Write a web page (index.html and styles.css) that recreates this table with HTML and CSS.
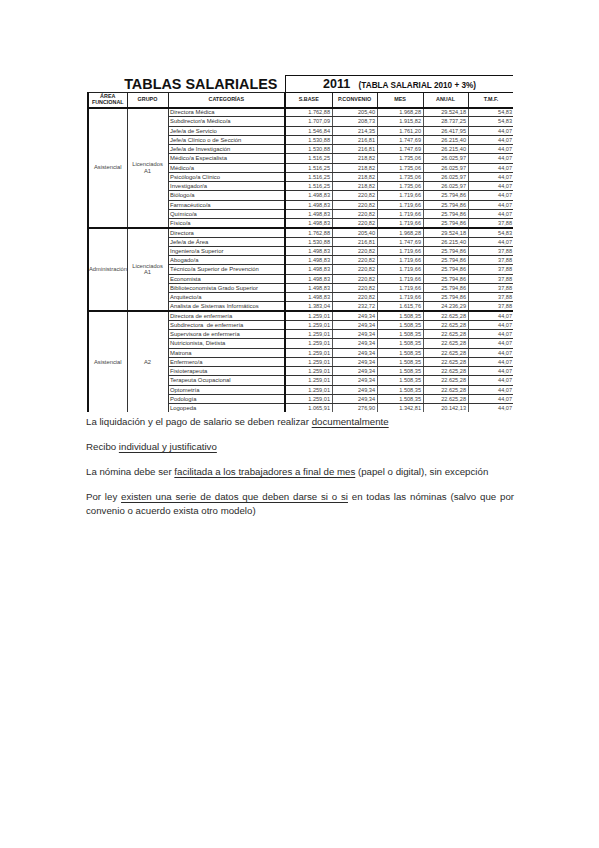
FILE: index.html
```html
<!DOCTYPE html>
<html lang="es">
<head>
<meta charset="utf-8">
<title>Tablas salariales</title>
<link rel="stylesheet" href="styles.css">
</head>
<body>
<div class="page">
  <div class="sheet">
    <table class="tbl">
      <colgroup>
        <col class="c-area"><col class="c-grupo"><col class="c-cat">
        <col class="c-base"><col class="c-conv"><col class="c-mes"><col class="c-anual"><col class="c-tmf">
      </colgroup>
      <tr class="title-row">
        <td colspan="3" class="title">TABLAS SALARIALES</td>
        <td colspan="5" class="year"><span class="y">2011</span> <span class="ysub">(TABLA SALARIAL 2010 + 3%)</span></td>
      </tr>
      <tr class="head">
        <th class="area">ÁREA<br>FUNCIONAL</th>
        <th>GRUPO</th>
        <th class="cat">CATEGORÍAS</th>
        <th class="first">S.BASE</th>
        <th>P.CONVENIO</th>
        <th>MES</th>
        <th>ANUAL</th>
        <th class="last">T.M.F.</th>
      </tr>
      <tr class="row grp">
        <td rowspan="13" class="area lbl">Asistencial</td>
        <td rowspan="13" class="grupo lbl">Licenciados<br>A1</td>
        <td class="cat">Directora Médica</td><td class="n first">1.762,88</td><td class="n">205,40</td><td class="n">1.968,28</td><td class="n">29.524,18</td><td class="n last">54,83</td>
      </tr>
      <tr class="row"><td class="cat">Subdirector/a Médico/a</td><td class="n first">1.707,09</td><td class="n">208,73</td><td class="n">1.915,82</td><td class="n">28.737,25</td><td class="n last">54,83</td></tr>
      <tr class="row"><td class="cat">Jefe/a de Servicio</td><td class="n first">1.546,84</td><td class="n">214,35</td><td class="n">1.761,20</td><td class="n">26.417,95</td><td class="n last">44,07</td></tr>
      <tr class="row"><td class="cat">Jefe/a Clínico o de Sección</td><td class="n first">1.530,88</td><td class="n">216,81</td><td class="n">1.747,69</td><td class="n">26.215,40</td><td class="n last">44,07</td></tr>
      <tr class="row"><td class="cat">Jefe/a de Investigación</td><td class="n first">1.530,88</td><td class="n">216,81</td><td class="n">1.747,69</td><td class="n">26.215,40</td><td class="n last">44,07</td></tr>
      <tr class="row"><td class="cat">Médico/a Especialista</td><td class="n first">1.516,25</td><td class="n">218,82</td><td class="n">1.735,06</td><td class="n">26.025,97</td><td class="n last">44,07</td></tr>
      <tr class="row"><td class="cat">Médico/a</td><td class="n first">1.516,25</td><td class="n">218,82</td><td class="n">1.735,06</td><td class="n">26.025,97</td><td class="n last">44,07</td></tr>
      <tr class="row"><td class="cat">Psicólogo/a Clínico</td><td class="n first">1.516,25</td><td class="n">218,82</td><td class="n">1.735,06</td><td class="n">26.025,97</td><td class="n last">44,07</td></tr>
      <tr class="row"><td class="cat">Investigador/a</td><td class="n first">1.516,25</td><td class="n">218,82</td><td class="n">1.735,06</td><td class="n">26.025,97</td><td class="n last">44,07</td></tr>
      <tr class="row"><td class="cat">Biólogo/a</td><td class="n first">1.498,83</td><td class="n">220,82</td><td class="n">1.719,66</td><td class="n">25.794,86</td><td class="n last">44,07</td></tr>
      <tr class="row"><td class="cat">Farmacéutico/a</td><td class="n first">1.498,83</td><td class="n">220,82</td><td class="n">1.719,66</td><td class="n">25.794,86</td><td class="n last">44,07</td></tr>
      <tr class="row"><td class="cat">Químico/a</td><td class="n first">1.498,83</td><td class="n">220,82</td><td class="n">1.719,66</td><td class="n">25.794,86</td><td class="n last">44,07</td></tr>
      <tr class="row"><td class="cat">Físico/a</td><td class="n first">1.498,83</td><td class="n">220,82</td><td class="n">1.719,66</td><td class="n">25.794,86</td><td class="n last">37,88</td></tr>

      <tr class="row grp">
        <td rowspan="9" class="area lbl">Administración</td>
        <td rowspan="9" class="grupo lbl">Licenciados<br>A1</td>
        <td class="cat">Directora</td><td class="n first">1.762,88</td><td class="n">205,40</td><td class="n">1.968,28</td><td class="n">29.524,18</td><td class="n last">54,83</td>
      </tr>
      <tr class="row"><td class="cat">Jefe/a de Área</td><td class="n first">1.530,88</td><td class="n">216,81</td><td class="n">1.747,69</td><td class="n">26.215,40</td><td class="n last">44,07</td></tr>
      <tr class="row"><td class="cat">Ingeniero/a Superior</td><td class="n first">1.498,83</td><td class="n">220,82</td><td class="n">1.719,66</td><td class="n">25.794,86</td><td class="n last">37,88</td></tr>
      <tr class="row"><td class="cat">Abogado/a</td><td class="n first">1.498,83</td><td class="n">220,82</td><td class="n">1.719,66</td><td class="n">25.794,86</td><td class="n last">37,88</td></tr>
      <tr class="row"><td class="cat">Técnico/a Superior de Prevención</td><td class="n first">1.498,83</td><td class="n">220,82</td><td class="n">1.719,66</td><td class="n">25.794,86</td><td class="n last">37,88</td></tr>
      <tr class="row"><td class="cat">Economista</td><td class="n first">1.498,83</td><td class="n">220,82</td><td class="n">1.719,66</td><td class="n">25.794,86</td><td class="n last">37,88</td></tr>
      <tr class="row"><td class="cat">Biblioteconomista Grado Superior</td><td class="n first">1.498,83</td><td class="n">220,82</td><td class="n">1.719,66</td><td class="n">25.794,86</td><td class="n last">37,88</td></tr>
      <tr class="row"><td class="cat">Arquitecto/a</td><td class="n first">1.498,83</td><td class="n">220,82</td><td class="n">1.719,66</td><td class="n">25.794,86</td><td class="n last">37,88</td></tr>
      <tr class="row"><td class="cat">Analista de Sistemas Informáticos</td><td class="n first">1.383,04</td><td class="n">232,72</td><td class="n">1.615,76</td><td class="n">24.236,29</td><td class="n last">37,88</td></tr>

      <tr class="row grp">
        <td rowspan="11" class="area lbl">Asistencial</td>
        <td rowspan="11" class="grupo lbl">A2</td>
        <td class="cat">Directora de enfermería</td><td class="n first">1.259,01</td><td class="n">249,34</td><td class="n">1.508,35</td><td class="n">22.625,28</td><td class="n last">44,07</td>
      </tr>
      <tr class="row"><td class="cat">Subdirectora&nbsp; de enfermería</td><td class="n first">1.259,01</td><td class="n">249,34</td><td class="n">1.508,35</td><td class="n">22.625,28</td><td class="n last">44,07</td></tr>
      <tr class="row"><td class="cat">Supervisora de enfermería</td><td class="n first">1.259,01</td><td class="n">249,34</td><td class="n">1.508,35</td><td class="n">22.625,28</td><td class="n last">44,07</td></tr>
      <tr class="row"><td class="cat">Nutricionista, Dietista</td><td class="n first">1.259,01</td><td class="n">249,34</td><td class="n">1.508,35</td><td class="n">22.625,28</td><td class="n last">44,07</td></tr>
      <tr class="row"><td class="cat">Matrona</td><td class="n first">1.259,01</td><td class="n">249,34</td><td class="n">1.508,35</td><td class="n">22.625,28</td><td class="n last">44,07</td></tr>
      <tr class="row"><td class="cat">Enfermero/a</td><td class="n first">1.259,01</td><td class="n">249,34</td><td class="n">1.508,35</td><td class="n">22.625,28</td><td class="n last">44,07</td></tr>
      <tr class="row"><td class="cat">Fisioterapeuta</td><td class="n first">1.259,01</td><td class="n">249,34</td><td class="n">1.508,35</td><td class="n">22.625,28</td><td class="n last">44,07</td></tr>
      <tr class="row"><td class="cat">Terapeuta Ocupacional</td><td class="n first">1.259,01</td><td class="n">249,34</td><td class="n">1.508,35</td><td class="n">22.625,28</td><td class="n last">44,07</td></tr>
      <tr class="row"><td class="cat">Optometría</td><td class="n first">1.259,01</td><td class="n">249,34</td><td class="n">1.508,35</td><td class="n">22.625,28</td><td class="n last">44,07</td></tr>
      <tr class="row"><td class="cat">Podología</td><td class="n first">1.259,01</td><td class="n">249,34</td><td class="n">1.508,35</td><td class="n">22.625,28</td><td class="n last">44,07</td></tr>
      <tr class="row"><td class="cat">Logopeda</td><td class="n first">1.065,91</td><td class="n">276,90</td><td class="n">1.342,81</td><td class="n">20.142,13</td><td class="n last">44,07</td></tr>
    </table>
  </div>

  <div class="text">
    <p>La liquidación y el pago de salario se deben realizar <u>documentalmente</u></p>
    <p>Recibo <u>individual y justificativo</u></p>
    <p>La nómina debe ser <u>facilitada a los trabajadores a final de mes</u> (papel o digital), sin excepción</p>
    <p class="just">Por ley <u>existen una serie de datos que deben darse si o si</u> en todas las nóminas (salvo que por convenio o acuerdo exista otro modelo)</p>
  </div>
</div>
</body>
</html>
```

FILE: styles.css
```css
* { box-sizing: border-box; }
html, body { margin: 0; padding: 0; background: #ffffff; }
.page { width: 599px; height: 848px; position: relative; overflow: hidden; }

.sheet {
  margin-left: 87px;
  padding-top: 75px;
  width: 426px;
  height: 412px;
  overflow: hidden;
}

.tbl {
  border-collapse: collapse;
  table-layout: fixed;
  width: 426px;
  font-family: "Liberation Sans Narrow", "Liberation Sans", Arial, sans-serif;
  color: #2a2a2a;
}
.c-area { width: 39px; }
.c-grupo { width: 41px; }
.c-cat { width: 117px; }
.c-base { width: 47px; }
.c-conv { width: 45px; }
.c-mes { width: 46px; }
.c-anual { width: 45px; }
.c-tmf { width: 46px; }

.tbl td, .tbl th { padding: 0; overflow: hidden; white-space: nowrap; }

.title-row { height: 17px; }
.title {
  font-family: "Liberation Sans", Arial, sans-serif;
  font-weight: bold;
  font-size: 14.4px;
  line-height: 14px;
  color: #111;
  text-align: center;
  padding-left: 29px !important;
  vertical-align: bottom;
  padding-bottom: 1px !important;
}
.year {
  border: 1.5px solid #111;
  border-bottom: 1.5px solid #111;
  text-align: center;
  font-family: "Liberation Sans", Arial, sans-serif;
  font-weight: bold;
  color: #111;
  vertical-align: middle;
  line-height: 12px;
}
.year .y { font-size: 12.5px; }
.year .ysub { font-size: 8.2px; margin-left: 4px; }

.head { height: 15px; }
.head th {
  font-size: 5.4px;
  line-height: 5.6px;
  font-weight: bold;
  text-align: center;
  vertical-align: middle;
  border: 1px solid #222;
  color: #222;
}
.head th.area { border-left: 2px solid #111; }
.head th.cat { border-right: 2px solid #111; }
.head th.last { border-right: 1.5px solid #111; }

.row { height: 9.25px; }
.row td {
  font-size: 5.6px;
  line-height: 6px;
  border-top: 1px solid #333;
  border-bottom: 1px solid #333;
  vertical-align: middle;
}
.row td.lbl {
  text-align: center;
  font-size: 5.8px;
  line-height: 6.4px;
  color: #444;
  border-right: 1px solid #333;
  white-space: normal;
}
.row td.area { border-left: 2px solid #111; }
.row td.cat {
  padding-left: 1.5px;
  border-right: 2px solid #111;
  border-left: 1px solid #333;
  color: #333;
  font-size: 5.9px;
}
.row td.n {
  text-align: right;
  padding-right: 1.5px;
  border-right: 1px solid #555;
  color: #444;
}
.row td.last { border-right: 1.5px solid #111; }
.row.grp td { border-top: 2px solid #111; }

.text {
  margin-left: 86px;
  width: 428px;
  margin-top: 3px;
  font-family: "Liberation Sans", Arial, sans-serif;
  font-size: 9.7px;
  line-height: 13.5px;
  color: #2b2b2b;
}
.text p { margin: 0 0 11.5px 0; }
.text p.just { text-align: justify; }
.text u { text-decoration-thickness: 0.6px; text-underline-offset: 1.5px; }
```
